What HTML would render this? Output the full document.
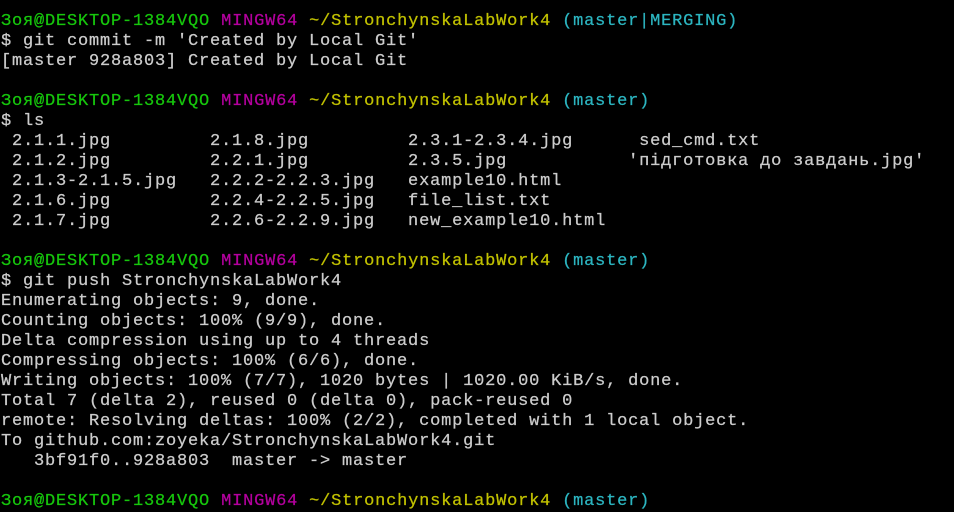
<!DOCTYPE html>
<html><head><meta charset="utf-8"><style>
html,body{margin:0;padding:0;background:#000;width:954px;height:495px;overflow:hidden}
pre{margin:0;position:absolute;left:1px;top:12px;font-family:"Liberation Mono","DejaVu Sans Mono",monospace;font-size:17px;letter-spacing:0.8px;line-height:20px;color:#cccccc;white-space:pre;-webkit-text-stroke:0.25px}
.g{color:#16c60c}.m{color:#b4009e}.y{color:#c1c100}.c{color:#2cb5c0}
</style></head><body><pre><span class="g">Зоя@DESKTOP-1384VQO</span> <span class="m">MINGW64</span> <span class="y">~/StronchynskaLabWork4</span> <span class="c">(master|MERGING)</span>
$ git commit -m 'Created by Local Git'
[master 928a803] Created by Local Git

<span class="g">Зоя@DESKTOP-1384VQO</span> <span class="m">MINGW64</span> <span class="y">~/StronchynskaLabWork4</span> <span class="c">(master)</span>
$ ls
 2.1.1.jpg         2.1.8.jpg         2.3.1-2.3.4.jpg      sed_cmd.txt
 2.1.2.jpg         2.2.1.jpg         2.3.5.jpg           'підготовка до завдань.jpg'
 2.1.3-2.1.5.jpg   2.2.2-2.2.3.jpg   example10.html
 2.1.6.jpg         2.2.4-2.2.5.jpg   file_list.txt
 2.1.7.jpg         2.2.6-2.2.9.jpg   new_example10.html

<span class="g">Зоя@DESKTOP-1384VQO</span> <span class="m">MINGW64</span> <span class="y">~/StronchynskaLabWork4</span> <span class="c">(master)</span>
$ git push StronchynskaLabWork4
Enumerating objects: 9, done.
Counting objects: 100% (9/9), done.
Delta compression using up to 4 threads
Compressing objects: 100% (6/6), done.
Writing objects: 100% (7/7), 1020 bytes | 1020.00 KiB/s, done.
Total 7 (delta 2), reused 0 (delta 0), pack-reused 0
remote: Resolving deltas: 100% (2/2), completed with 1 local object.
To github.com:zoyeka/StronchynskaLabWork4.git
   3bf91f0..928a803  master -> master

<span class="g">Зоя@DESKTOP-1384VQO</span> <span class="m">MINGW64</span> <span class="y">~/StronchynskaLabWork4</span> <span class="c">(master)</span>
</pre></body></html>
